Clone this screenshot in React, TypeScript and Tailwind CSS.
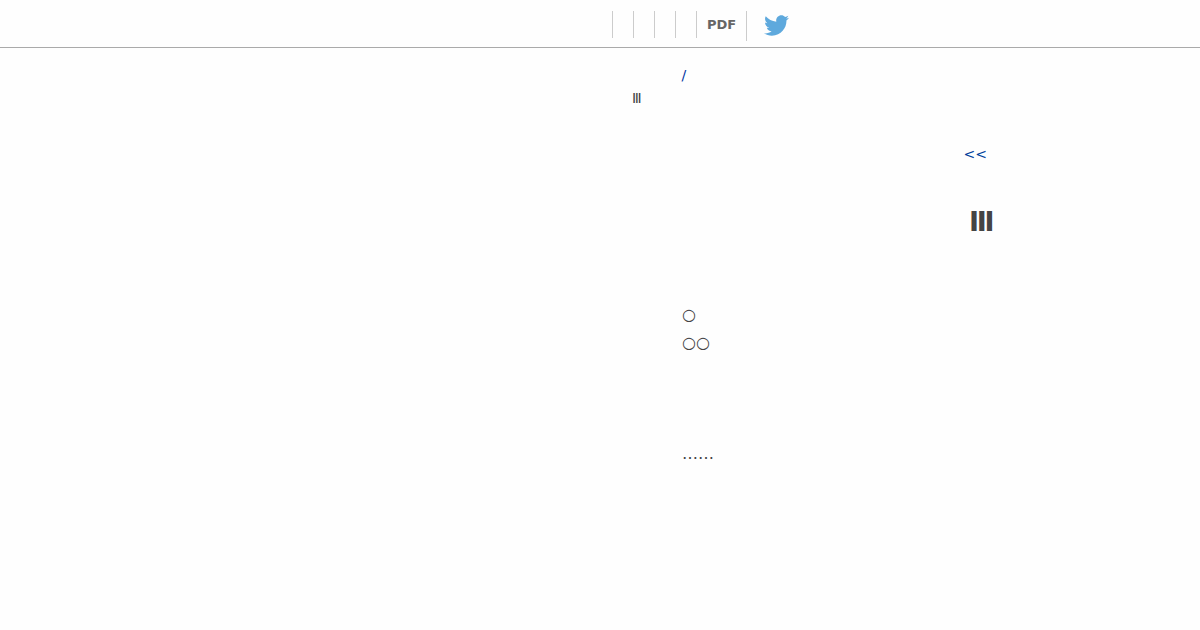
import React from 'react';
import { FaTwitter } from 'react-icons/fa';

const emptyItems = ['browse', 'search', 'ranking', 'help'];

const Toolbar: React.FC = () => (
  <header className="flex h-12 items-start border-b border-[#aaaaaa] pl-[612px] pt-[11px]">
    {emptyItems.map((item) => (
      <span key={item} className="h-[27px] w-[21px] border-l border-[#cccccc]" />
    ))}
    <span className="h-[27px] w-[50px] border-l border-[#cccccc] pl-[10px] text-[13px] leading-[27px] font-bold text-[#666666]">
      PDF
    </span>
    <span className="flex h-[30px] items-center border-l border-[#cccccc] pb-px pl-[17px]">
      <FaTwitter className="h-[25px] w-[25px] text-[#5ea9dd]" />
    </span>
  </header>
);

const App: React.FC = () => (
  <div className="h-[630px] w-[1200px] overflow-hidden bg-[#fefefe] font-['DejaVu_Sans',sans-serif] text-[#444444] will-change-[opacity]">
    <Toolbar />
    <main className="flex flex-col">
      <a className="mt-[17px] pl-[681.5px] text-[14px] leading-5 text-[#0033a0]">/</a>
      <p className="mt-[3px] pl-[632px] text-[14px] leading-5">Ⅲ</p>
      <a className="mt-[36px] pl-[963.5px] text-[14px] leading-5 text-[#003f9a]">&lt;&lt;</a>
      <h1 className="mt-[43px] pl-[969px] text-[27px] leading-[30px] font-bold">Ⅲ</h1>
      <p className="mt-[64px] pl-[682px] text-[16px] leading-7">○</p>
      <p className="pl-[682px] text-[16px] leading-7">○○</p>
      <p className="mt-[83px] pl-[682px] text-[16px] leading-7">……</p>
    </main>
  </div>
);

export default App;
